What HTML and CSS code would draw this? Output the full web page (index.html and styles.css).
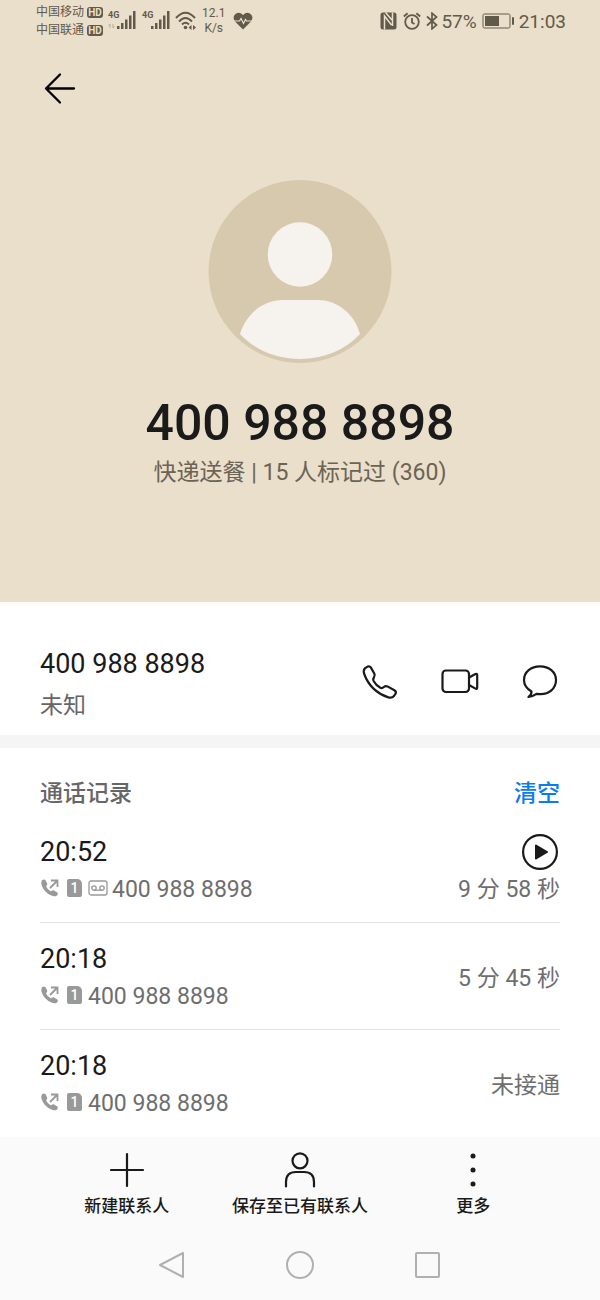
FILE: index.html
```html
<!DOCTYPE html>
<html lang="zh-CN">
<head>
<meta charset="UTF-8">
<meta name="viewport" content="width=device-width, initial-scale=1">
<title>400 988 8898</title>
<link rel="stylesheet" href="styles.css">
</head>
<body>

<!-- shared icons -->
<svg class="sprite" width="0" height="0" aria-hidden="true">
  <symbol id="i-out" viewBox="0 0 20 20">
    <path d="M1.800 2.400 Q3.600 .6 5.400 2 L7.200 5.400 Q7.600 6.800 6 8.200 Q7.400 11.800 11 13.400 Q12.400 12 14 12.400 L17.400 14.400 Q18.600 15.800 17 17.400 Q14.800 19 11.400 17.600 Q3.600 14 1.600 7 Q1 4.400 1.800 2.400Z" fill="#999"/>
    <path d="M10 10 L17 3 M11 2.500 H17.500 V9" fill="none" stroke="#999" stroke-width="1.800"/>
  </symbol>
  <symbol id="i-signal" viewBox="0 0 30 20">
    <path d="M10 16h2.500v3H10z M14 13h2.500v6H14z M18 9.500h2.500V19H18z M22 5.500h2.500V19H22z M26 1h2.500v18H26z"/>
  </symbol>
</svg>

<header class="hero">
  <div class="status">
    <div class="carriers">
      <div>中国移动<b class="hd">HD</b></div>
      <div>中国联通<b class="hd">HD</b></div>
    </div>
    <div class="signal">
      <span>4G</span>
      <svg width="30" height="20" viewBox="0 0 30 20">
        <use href="#i-signal"/>
        <path d="M3 18v-4l-1.500 1.500 M6 14v4l1.500-1.500" fill="none" stroke="#b5ab97"/>
      </svg>
    </div>
    <div class="signal"><span>4G</span><svg width="30" height="20"><use href="#i-signal"/></svg></div>
    <svg class="wifi" width="22" height="20" viewBox="0 0 22 20" fill="none" stroke="#615a4b" stroke-width="2">
      <path d="M1 7 Q10.500 -3.500 20 7 M4 10.500 Q10.500 3.500 17 10.500 M7 13.500 Q10.500 10 14 13.500"/>
      <circle cx="10.500" cy="16.500" r="1.800" fill="#615a4b" stroke="none"/>
      <path d="M13.500 16.500 l3-2.500v5z M21 16.500 l-3-2.500v5z" fill="#615a4b" stroke="none"/>
    </svg>
    <div class="speed"><div>12.1</div><div>K/s</div></div>
    <svg width="20" height="18" viewBox="0 0 20 18">
      <path d="M10 17.500 L2 9.500 Q-.5 6 1.500 3 Q5.500 -1.500 10 3 Q14.500 -1.500 18.500 3 Q20.500 6 18 9.500Z" fill="#615a4b"/>
      <path d="M1 9h5.500l1.500-2.500 2.500 5 2-4 1 1.500H19" fill="none" stroke="#eadfca" stroke-width="1.200"/>
    </svg>
    <div class="status-right">
      <svg class="nfc" width="17" height="18" viewBox="0 0 17 18">
        <path d="M3 .5 H14 Q16.500 .5 16.500 3 V15 Q16.500 17.500 14 17.500 H3 Q.5 17.500 .5 15 V3 Q.5 .5 3 .5Z" fill="#615a4b"/>
        <path d="M4.500 17.500 V4 L11.500 13 M5.500 .5 L12.500 8.500 V.5 M4.500 4 V9 M12.500 14 V5" fill="none" stroke="#eadfca" stroke-width="1.500"/>
      </svg>
      <svg class="alarm" width="18" height="18" viewBox="0 0 18 18" fill="none" stroke="#615a4b" stroke-width="1.800">
        <circle cx="9" cy="10" r="6.800"/>
        <path d="M9 6v4.500l2.500 1.500 M.8 4.500 L4.600 1.200 M17.200 4.500 L13.400 1.200"/>
      </svg>
      <svg width="12" height="18" viewBox="0 0 12 18" fill="none" stroke="#615a4b" stroke-width="1.700">
        <path d="M1 4.500 L10.500 13 L6 16.800 V1.200 L10.500 5 L1 13.500"/>
      </svg>
      <span class="percent">57%</span>
      <svg width="33" height="16" viewBox="0 0 33 16">
        <rect x="1" y="1" width="27" height="14" rx="1.500" fill="none" stroke="#615a4b"/>
        <rect x="3" y="3" width="14" height="10" fill="#615a4b"/>
        <rect x="30" y="4" width="2" height="8" rx="1" fill="#615a4b"/>
      </svg>
      <time>21:03</time>
    </div>
  </div>

  <button class="back" aria-label="返回">
    <svg width="40" height="40" viewBox="0 0 40 40" fill="none" stroke="#000" stroke-width="2.300" stroke-linecap="round" stroke-linejoin="round">
      <path d="M20 6.500 L6 20.500 L20 34.500 M6 20.500 H34"/>
    </svg>
  </button>

  <svg class="avatar" width="184" height="184" viewBox="0 0 184 184">
    <circle cx="92" cy="91.500" r="91.500" fill="#d6c9ae"/>
    <circle cx="92" cy="74.500" r="32.300" fill="#f6f3ef"/>
    <path d="M75 120 H109 C129 120 146 133 152 154 C137 170 116 179 92 179 C68 179 47 170 32 154 C38 134 55 120 75 120Z" fill="#f6f3ef"/>
  </svg>
  <h1>400 988 8898</h1>
  <p>快递送餐 | 15 人标记过 (360)</p>
</header>

<main>
  <section class="contact">
    <div>
      <div class="number">400 988 8898</div>
      <div class="place">未知</div>
    </div>
    <div class="actions">
      <button aria-label="拨号">
        <svg width="40" height="40" viewBox="0 0 40 40">
          <path d="M4.800 4.400 L7.600 2.600 Q9.600 1.800 10.800 3.400 L14.400 9.800 Q15.200 11.400 14 13.200 Q12.600 15 13.600 17 Q16 21.400 20.400 23.800 Q22.200 24.600 23.800 23 Q25.400 21.600 27.400 22.400 L34.400 26.200 Q36.600 27.600 35.600 29.600 L34 32 Q32 34.400 28.400 33.400 Q10.600 27.400 4.200 10 Q3 6.400 4.800 4.400Z"/>
        </svg>
      </button>
      <button aria-label="视频通话">
        <svg width="40" height="40" viewBox="0 0 40 40">
          <rect x="2.500" y="6.500" width="26.500" height="21.500" rx="3.500"/>
          <path d="M29 13.500 L35.500 10 Q37.200 9.200 37.200 11 V23.500 Q37.200 25.400 35.500 24.600 L29 21"/>
        </svg>
      </button>
      <button aria-label="短信">
        <svg width="40" height="40" viewBox="0 0 40 40">
          <path d="M11.500 27.500 Q4 23 4 16 C4 8 11 2.300 20 2.300 C29 2.300 36 8 36 16 C36 24.500 29 30.500 20 30.200 L16.500 29.800 Q12.500 32.500 8.500 33 Q11.500 31 11.500 27.500Z"/>
        </svg>
      </button>
    </div>
  </section>

  <section class="log">
    <div class="log-head">
      <h2>通话记录</h2>
      <button class="clear">清空</button>
    </div>
    <ul>
      <li>
        <div>
          <div class="time">20:52</div>
          <div class="line">
            <svg width="20" height="20"><use href="#i-out"/></svg>
            <span class="sim">1</span>
            <svg class="tape" width="20" height="16" viewBox="0 0 20 16" fill="none" stroke="#999" stroke-width="1.300">
              <rect x="1" y="1" width="18" height="14" rx="2"/>
              <circle cx="6" cy="8" r="2.200"/><circle cx="14" cy="8" r="2.200"/><path d="M6 10.200h8"/>
            </svg>
            <span>400 988 8898</span>
          </div>
        </div>
        <div class="result">
          <button class="play" aria-label="播放录音">
            <svg width="40" height="36" viewBox="0 0 40 36">
              <circle cx="20" cy="18" r="16.900" fill="none" stroke="#1a1a1a" stroke-width="2.200"/>
              <path d="M16 11.500 L27 18 L16 24.500Z" fill="#1a1a1a" stroke="#1a1a1a" stroke-width="2" stroke-linejoin="round"/>
            </svg>
          </button>
          <div>9 分 58 秒</div>
        </div>
      </li>
      <li>
        <div>
          <div class="time">20:18</div>
          <div class="line">
            <svg width="20" height="20"><use href="#i-out"/></svg>
            <span class="sim">1</span>
            <span>400 988 8898</span>
          </div>
        </div>
        <div class="result">5 分 45 秒</div>
      </li>
      <li>
        <div>
          <div class="time">20:18</div>
          <div class="line">
            <svg width="20" height="20"><use href="#i-out"/></svg>
            <span class="sim">1</span>
            <span>400 988 8898</span>
          </div>
        </div>
        <div class="result">未接通</div>
      </li>
    </ul>
  </section>
</main>

<footer>
  <div class="tools">
    <button>
      <svg width="40" height="40" viewBox="0 0 40 40"><path d="M20 4v32 M4 20h32"/></svg>
      新建联系人
    </button>
    <button>
      <svg width="40" height="40" viewBox="0 0 40 40"><circle cx="20" cy="10.800" r="7.500"/><path d="M6 36.500 V32 Q6 22 16 22 H24 Q34 22 34 32 V36.500"/></svg>
      保存至已有联系人
    </button>
    <button>
      <svg class="dots" width="40" height="40" viewBox="0 0 40 40"><circle cx="20" cy="6" r="2.500"/><circle cx="20" cy="20" r="2.500"/><circle cx="20" cy="34" r="2.500"/></svg>
      更多
    </button>
  </div>
  <nav>
    <button aria-label="返回"><svg width="32" height="32" viewBox="0 0 32 32"><path d="M27 4 V28 L4 16Z"/></svg></button>
    <button aria-label="主页"><svg width="32" height="32" viewBox="0 0 32 32"><circle cx="16" cy="16" r="13"/></svg></button>
    <button aria-label="最近任务"><svg width="32" height="32" viewBox="0 0 32 32"><rect x="4" y="4" width="23" height="24" rx="1"/></svg></button>
  </nav>
</footer>

</body>
</html>
```
FILE: styles.css
```css
* {
  box-sizing: border-box;
}
body {
  margin: 0;
  min-height: 100vh;
  display: flex;
  flex-direction: column;
  background: #fff;
  color: #1a1a1a;
  font-family: Roboto, "Noto Sans CJK SC", sans-serif;
}
h1, h2, p, ul {
  margin: 0;
  padding: 0;
}
button {
  padding: 0;
  border: 0;
  background: none;
  color: inherit;
  font: inherit;
  cursor: pointer;
}
svg {
  display: block;
  flex: none;
}
.sprite {
  position: absolute;
}

/* top area */
.hero {
  background: #eadfca;
  padding-bottom: 109px;
  text-align: center;
}
.status {
  display: flex;
  align-items: center;
  height: 42px;
  padding: 0 34px 0 36px;
  color: #615a4b;
  fill: #615a4b;
  font-size: 12px;
  white-space: nowrap;
}
.carriers {
  line-height: 18px;
}
.carriers div {
  display: flex;
  align-items: center;
  gap: 3px;
}
.hd {
  width: 16px;
  border-radius: 3px;
  background: #615a4b;
  color: #eadfca;
  font-size: 10px;
  line-height: 11px;
}
.signal {
  position: relative;
  margin: 0 0 2px 4px;
}
.signal span {
  position: absolute;
  left: 1px;
  top: 0;
  font-size: 9px;
  font-weight: bold;
  line-height: 10px;
}
.wifi {
  margin-left: 4px;
}
.speed {
  margin: 0 8px 0 5px;
  line-height: 15px;
}
.status-right {
  display: flex;
  align-items: center;
  margin-left: auto;
  font-size: 19px;
}
.nfc {
  margin-right: 6px;
}
.alarm {
  margin-right: 5px;
}
.percent {
  margin: 0 5px 0 3px;
}
.status-right time {
  margin-left: 4px;
}
.back {
  display: block;
  margin: 26px 0 72px 40px;
}
.avatar {
  margin: 0 auto 29px;
}
h1 {
  font-size: 50px;
  font-weight: 500;
  line-height: 60px;
}
.hero p {
  color: #6b6456;
  font-size: 23px;
  line-height: 40px;
}

/* number + actions */
.contact {
  display: flex;
  justify-content: space-between;
  padding: 44px 40px 10px;
  border-bottom: 13px solid #f5f5f5;
}
.number, .time {
  font-size: 27px;
  line-height: 36px;
}
.place {
  margin-top: 4px;
  color: #666;
  font-size: 23px;
  line-height: 39px;
}
.actions {
  display: flex;
  align-items: center;
  gap: 40px;
  padding-bottom: 3px;
}
.actions svg {
  fill: none;
  stroke: #1a1a1a;
  stroke-width: 2.2;
  stroke-linejoin: round;
}

/* call log */
.log {
  padding: 0 40px;
}
.log-head {
  display: flex;
  justify-content: space-between;
  padding: 28px 0 4px;
  font-size: 23px;
  line-height: 36px;
}
h2 {
  color: #666;
  font-size: 23px;
  font-weight: 500;
}
.clear {
  color: #0a7cf0;
  font-weight: 500;
}
ul {
  list-style: none;
}
li {
  display: flex;
  align-items: center;
  justify-content: space-between;
  padding: 18px 0 12px;
  border-bottom: 1px solid #e2e2e2;
}
li:last-child {
  border-bottom-color: transparent;
}
.line {
  display: flex;
  align-items: center;
  color: #6e6e6e;
  font-size: 23px;
  line-height: 40px;
}
.line svg, .sim {
  margin-bottom: 4px;
}
.sim {
  width: 15px;
  margin-left: 7px;
  margin-right: 6px;
  border-radius: 2px 5px 2px 2px;
  background: #999;
  color: #fff;
  font-size: 14px;
  font-weight: 500;
  line-height: 18px;
  text-align: center;
}
.line .tape {
  margin-right: 4px;
}
.result {
  color: #6e6e6e;
  font-size: 23px;
  line-height: 40px;
  text-align: right;
}
.play {
  display: block;
  margin-left: auto;
}

/* bottom bars */
footer {
  margin-top: auto;
  background: #fafafa;
}
.tools {
  display: grid;
  grid-template-columns: repeat(3, 1fr);
  padding: 13px 40px 0;
}
.tools button {
  display: flex;
  flex-direction: column;
  align-items: center;
  gap: 4px;
  font-size: 17px;
  font-weight: 500;
  line-height: 24px;
  white-space: nowrap;
}
.tools svg {
  fill: none;
  stroke: #1a1a1a;
  stroke-width: 2.2;
  stroke-linecap: round;
}
.tools .dots {
  fill: #1a1a1a;
  stroke: none;
}
nav {
  display: grid;
  grid-template-columns: repeat(3, 1fr);
  justify-items: center;
  padding: 31px 18% 19px;
}
nav svg {
  fill: none;
  stroke: #b0b0b0;
  stroke-width: 2;
  stroke-linejoin: round;
}
```
